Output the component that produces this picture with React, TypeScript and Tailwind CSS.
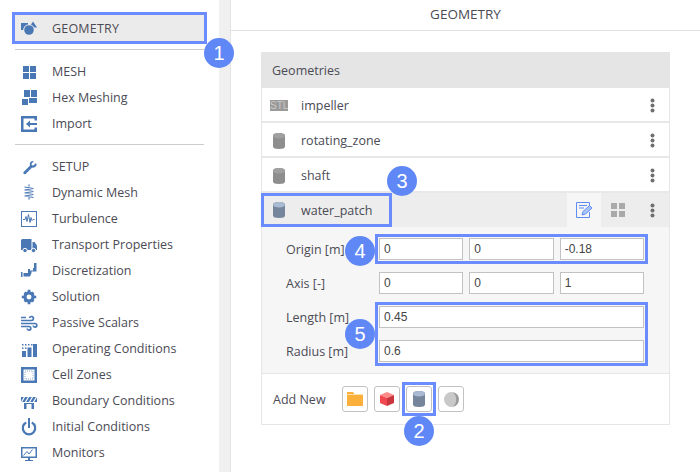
import type { ReactNode } from 'react';

const BLUE = '#4a78b5';

const Svg = ({ children }: { children: ReactNode }) => (
  <svg width="16" height="16" viewBox="0 0 16 16" fill={BLUE} className="shrink-0 overflow-visible">
    {children}
  </svg>
);

const GeometryIcon = () => (
  <Svg>
    <rect x="0" y="2" width="7" height="7" />
    <path d="M12 0.500l4 6h-8z" />
    <circle cx="8" cy="9" r="5.800" fill="#ebebeb" />
    <circle cx="8" cy="9" r="4.800" />
  </Svg>
);
const MeshIcon = () => (
  <Svg>
    <rect x="2" y="2" width="6" height="6" />
    <rect x="9" y="2" width="6" height="6" />
    <rect x="2" y="9" width="6" height="6" />
    <rect x="9" y="9" width="6" height="6" />
  </Svg>
);
const HexIcon = () => (
  <Svg>
    <rect x="3" y="0" width="6" height="7" />
    <rect x="10" y="0" width="6" height="7" />
    <rect x="1" y="9" width="6" height="6" />
    <rect x="8" y="8" width="8" height="5" />
  </Svg>
);
const ImportIcon = () => (
  <Svg>
    <path d="M0 0h16v4.500h-2.500v-2h-11v11h11v-2H16V16H0z" />
    <path d="M5 8l4-3.500V7h7v2H9v2.500z" />
  </Svg>
);
const WrenchIcon = () => (
  <Svg>
    <path
      transform="translate(2 2) scale(.85)"
      d="M15 2.500l-2.800 2.800-1.800-.4-.4-1.800L12.800 0C10.500-.6 8 1 8 3.500c0 .7.1 1.200.3 1.700L1 12.500c-.8.800-.8 1.800-.1 2.500s1.700.7 2.500-.1l7.300-7.300c2.700 1 5.600-1.200 5.300-4z"
    />
  </Svg>
);
const SpringIcon = () => (
  <Svg>
    <path d="M8 -.5v2M3.500 2l9 1.500M3.500 5l9 1.500M3.500 8l9 1.500M3.500 11l9 1.500M8 12.500v2M12.500 3.500L3.500 5M12.500 6.500L3.500 8M12.500 9.500L3.500 11" fill="none" stroke={BLUE} strokeWidth="1.200" />
  </Svg>
);
const TurbulenceIcon = () => (
  <Svg>
    <rect x="0.500" y="0.500" width="15" height="15" fill="none" stroke={BLUE} />
    <path d="M2 8.500h2l1-3 1 5 1.500-7 1.500 8 1-5 1 3 1-1h1.500" fill="none" stroke={BLUE} />
  </Svg>
);
const TruckIcon = () => (
  <Svg>
    <path d="M0 3.500Q0 2 1.500 2H10.500v11H0z" />
    <path d="M11.500 5h2L16 8.500V13h-4.500z" />
    <circle cx="4" cy="13.500" r="2.200" stroke="#fff" />
    <circle cx="12.500" cy="13.500" r="2.200" stroke="#fff" />
  </Svg>
);
const PipeIcon = () => (
  <Svg>
    <path d="M0 9h1.500v5H0zM2.500 10H7V6h2v1.500h3V5h1V0h2.500v8.500h-5V10L9 13.500H2.500z" />
  </Svg>
);
const GearIcon = () => (
  <Svg>
    <g transform="translate(.8 .8) scale(.9)">
      <circle cx="8" cy="8" r="4.500" fill="none" stroke={BLUE} strokeWidth="3.500" />
      <path d="M6.500 0h3v3h-3zM6.500 13h3v3h-3zM0 6.500h3v3H0zM13 6.500h3v3h-3zM2 4l2-2 2 2-2 2zM10 4l2-2 2 2-2 2zM2 12l2-2 2 2-2 2zM10 12l2-2 2 2-2 2z" />
    </g>
  </Svg>
);
const WindIcon = () => (
  <Svg>
    <path d="M0 5.500h10.500a2 2 0 1 0-2-2.500M0 8.500h14a1.800 1.800 0 1 1-1.800 2M0 11.500h8a1.800 1.800 0 1 1-1.800 2M0 2.500h5" fill="none" stroke={BLUE} strokeWidth="1.700" />
  </Svg>
);
const BarsIcon = () => (
  <Svg>
    <rect x="1" y="10" width="4" height="6" />
    <rect x="6.500" y="6.500" width="4" height="9.500" />
    <rect x="12" y="3" width="4" height="13" />
    <path d="M1 3h1.500v1.500H1zM4 3h1.500v1.500H4zM7 3h1.500v1.500H7zM10 3h1.500v1.500H10zM1 6.500h1.500V8H1zM4 6.500h1.500V8H4z" />
  </Svg>
);
const ZonesIcon = () => (
  <Svg>
    <path fillRule="evenodd" d="M0 0h16v16H0zM2.500 2.500v11h11v-11z" />
    <rect x="4" y="4" width="8" height="8" fill="none" stroke="#93afd2" strokeDasharray="1 1" />
  </Svg>
);
const BarrierIcon = () => (
  <Svg>
    <path d="M0 4h16v5H0z" />
    <path d="M3.500 4L0.500 9M7.500 4L4.500 9M11.500 4L8.500 9M15.500 4L12.500 9" stroke="#fff" strokeWidth="1.200" fill="none" />
    <path d="M3 10h2.500v6H3zM10.500 10H13v6h-2.500zM3 10h10v1H3z" />
  </Svg>
);
const PowerIcon = () => (
  <Svg>
    <path d="M5.200 3.600a6.200 6.200 0 1 0 5.600 0" fill="none" stroke={BLUE} strokeWidth="2.200" />
    <rect x="7" y="-1" width="2" height="10" />
  </Svg>
);
const MonitorIcon = () => (
  <Svg>
    <path fillRule="evenodd" d="M0 2h16v11H0zM1.500 3.500v8h13v-8z" />
    <path d="M2.500 10.500l3.500-4 2 2.500 3.500-4.500" fill="none" stroke={BLUE} />
    <path d="M7 13h2v2H7zM4 15h8v1H4z" />
  </Svg>
);

const Cylinder = ({ top, body }: { top: string; body: string }) => (
  <svg width="12" height="16" viewBox="0 0 12 16" className="shrink-0">
    <path d="M0 2.500Q0 0 6 0t6 2.500v11Q12 16 6 16t-6-2.500z" fill={body} />
    <ellipse cx="6" cy="2.800" rx="6" ry="2.800" fill={top} />
  </svg>
);

const Kebab = () => (
  <svg width="5" height="15" viewBox="0 0 5 15" fill="#6f6f6f" className="shrink-0">
    <circle cx="2.500" cy="2.500" r="2" />
    <circle cx="2.500" cy="7.500" r="2" />
    <circle cx="2.500" cy="12.500" r="2" />
  </svg>
);

const Badge = ({ n, className }: { n: number; className: string }) => (
  <div className={`absolute z-10 w-[30px] h-[30px] rounded-full bg-[#5f87f5] text-white flex items-center justify-center text-[20px] font-['Liberation_Sans',sans-serif] ${className}`}>
    {n}
  </div>
);

const NavRow = ({ icon, label }: { icon: ReactNode; label: string }) => (
  <div className="h-[26px] pt-[2px] flex items-center gap-[15px] pl-[21px]">
    {icon}
    <span>{label}</span>
  </div>
);

const setup: [ReactNode, string][] = [
  [<WrenchIcon />, 'SETUP'],
  [<SpringIcon />, 'Dynamic Mesh'],
  [<TurbulenceIcon />, 'Turbulence'],
  [<TruckIcon />, 'Transport Properties'],
  [<PipeIcon />, 'Discretization'],
  [<GearIcon />, 'Solution'],
  [<WindIcon />, 'Passive Scalars'],
  [<BarsIcon />, 'Operating Conditions'],
  [<ZonesIcon />, 'Cell Zones'],
  [<BarrierIcon />, 'Boundary Conditions'],
  [<PowerIcon />, 'Initial Conditions'],
  [<MonitorIcon />, 'Monitors'],
];

const Field = ({ value }: { value: string }) => (
  <input
    readOnly
    defaultValue={value}
    className="flex-1 min-w-0 w-full h-[22px] bg-white border border-[#c2c2c2] px-[4px] text-[12px] text-[#444] font-['Liberation_Sans',sans-serif] outline-none"
  />
);

const GeoRow = ({ icon, label }: { icon: ReactNode; label: string }) => (
  <div className="h-[35px] pt-[2px] flex items-center border-b-2 border-[#e8e8e8] bg-white">
    <div className="w-[34px] flex justify-center">{icon}</div>
    <span className="ml-[5px] pt-[2px] flex-1">{label}</span>
    <div className="w-[35px] flex justify-center pl-[1px]"><Kebab /></div>
  </div>
);

const AddButton = ({ children }: { children: ReactNode }) => (
  <div className="w-[26px] h-[26px] rounded-[3px] border border-[#c2c2c2] bg-white flex items-center justify-center">
    {children}
  </div>
);

export default function App() {
  return (
    <div className="w-[700px] h-[472px] overflow-hidden flex bg-white text-[12.500px] text-[#4b4b55] font-['Open_Sans',sans-serif]">
      {/* Sidebar */}
      <div className="w-[219px] shrink-0 pt-3">
        <div className="relative ml-3 w-[195px] h-8 pt-[2px] flex items-center gap-[15px] pl-[9px] bg-[#ebebeb] outline-3 -outline-offset-3 outline-[#6b8cff]">
          <GeometryIcon />
          <span className="tracking-[0.2px]">GEOMETRY</span>
          <Badge n={1} className="left-[192px] top-[26px]" />
        </div>
        <div className="mx-[15px] mt-[5px] mb-2 border-t border-[#cccccc]" />
        <NavRow icon={<MeshIcon />} label="MESH" />
        <NavRow icon={<HexIcon />} label="Hex Meshing" />
        <NavRow icon={<ImportIcon />} label="Import" />
        <div className="mx-[15px] mt-2 mb-2 border-t border-[#cccccc]" />
        {setup.map(([icon, label]) => (
          <NavRow key={label} icon={icon} label={label} />
        ))}
      </div>

      {/* Scroll gutter */}
      <div className="w-[12px] shrink-0 bg-[#f0f0f0] border-r border-[#e4e4e4]" />

      {/* Main */}
      <div className="flex-1 min-w-0">
        <div className="h-[31px] border-b border-[#e0e0e0] flex items-center justify-center pb-[1px] text-[13.500px]">GEOMETRY</div>

        <div className="mt-[21px] ml-[30px] w-[409px] border-x border-b border-[#e6e6e6]">
          <div className="h-[36px] -mx-px bg-[#e5e5e5] flex items-center pl-[11px] pt-[2px]">Geometries</div>
          <GeoRow
            icon={
              <div className="w-[18px] h-[11px] bg-[#9a9a9a] text-[#c9c9c9] text-[10px] leading-[11px] text-center font-['Liberation_Sans',sans-serif]">STL</div>
            }
            label="impeller"
          />
          <GeoRow icon={<Cylinder top="#a0a0a0" body="#8e8e8e" />} label="rotating_zone" />
          <GeoRow icon={<Cylinder top="#a0a0a0" body="#8e8e8e" />} label="shaft" />

          <div className="h-[34px] flex items-center bg-[#ededed]">
            <div className="relative w-[131px] h-[34px] -ml-px flex items-center outline-3 -outline-offset-3 outline-[#6b8cff]">
              <div className="w-[36px] flex justify-center"><Cylinder top="#a9bbd2" body="#75859c" /></div>
              <span className="ml-[4px] pt-[2px]">water_patch</span>
              <Badge n={3} className="left-[126px] -top-[27px]" />
            </div>
            <div className="flex-1" />
            <div className="w-[34px] h-[34px] bg-[#f6f6f6] flex items-center justify-center">
              <svg width="17" height="16" viewBox="0 0 17 16" fill="none" stroke="#5f8cf5">
                <path d="M13.500 5V.5H.5v15h13V10" />
                <path d="M3 3.500h8M3 6h5" />
                <path d="M6 13l1-3.500 6.500-6 2.500 2.500-6.500 6z" fill="#a9c4fb" />
              </svg>
            </div>
            <div className="w-[34px] flex justify-center">
              <svg width="14" height="14" viewBox="0 0 14 14" fill="#a9a9a9">
                <rect width="6" height="6" />
                <rect x="8" width="6" height="6" />
                <rect y="8" width="6" height="6" />
                <rect x="8" y="8" width="6" height="6" />
              </svg>
            </div>
            <div className="w-[34px] flex justify-center pl-px"><Kebab /></div>
          </div>

          <div className="bg-[#f6f6f6] border-b border-[#e6e6e6] pt-[11px] pb-[11px] pl-[24px] pr-[25px] flex flex-col gap-3">
            <div className="flex items-center">
              <span className="w-[93px] pt-[2px]">Origin [m]</span>
              <div className="relative flex-1 flex gap-[6px] outline-3 outline-offset-1 outline-[#6b8cff]">
                <Field value="0" />
                <Field value="0" />
                <Field value="-0.18" />
                <Badge n={4} className="-left-[34px] -top-[2px]" />
              </div>
            </div>
            <div className="flex items-center">
              <span className="w-[93px] pt-[2px]">Axis [-]</span>
              <div className="flex-1 flex gap-[6px]">
                <Field value="0" />
                <Field value="0" />
                <Field value="1" />
              </div>
            </div>
            <div className="flex">
              <div className="w-[93px] flex flex-col gap-3">
                <span className="h-[22px] leading-[24px]">Length [m]</span>
                <span className="h-[22px] leading-[24px]">Radius [m]</span>
              </div>
              <div className="relative flex-1 flex flex-col gap-3 outline-3 outline-offset-1 outline-[#6b8cff]">
                <Field value="0.45" />
                <Field value="0.6" />
                <Badge n={5} className="-left-[34px] top-[13px]" />
              </div>
            </div>
          </div>

          <div className="h-[50px] flex items-start pt-3 pl-[11px] bg-white">
            <span className="w-[69px] h-[26px] leading-[28px]">Add New</span>
            <div className="flex items-start gap-[6px]">
              <AddButton>
                <svg width="16" height="14" viewBox="0 0 16 14">
                  <path d="M0 0h6l1.500 2H16v12H0z" fill="#fbb03b" />
                  <path d="M0 2.500h16" stroke="#fde0a8" />
                </svg>
              </AddButton>
              <AddButton>
                <svg width="14" height="14" viewBox="0 0 14 14">
                  <path d="M7 0l7 3-7 3-7-3z" fill="#ff8a8a" />
                  <path d="M0 3l7 3v8l-7-3z" fill="#f0484f" />
                  <path d="M14 3l-7 3v8l7-3z" fill="#c9353d" />
                </svg>
              </AddButton>
              <div className="relative outline-3 outline-offset-1 outline-[#6b8cff]">
                <AddButton>
                  <Cylinder top="#a9bbd2" body="#75859c" />
                </AddButton>
                <Badge n={2} className="-left-[2px] top-[30px]" />
              </div>
              <AddButton>
                <svg width="15" height="15" viewBox="0 0 15 15">
                  <circle cx="7.500" cy="7.500" r="7.500" fill="#c8c8c8" />
                  <path d="M9 .2a7.500 7.500 0 0 1 0 14.600a10 10 0 0 0 0-14.600z" fill="#9a9a9a" />
                </svg>
              </AddButton>
            </div>
          </div>
        </div>
      </div>
    </div>
  );
}
